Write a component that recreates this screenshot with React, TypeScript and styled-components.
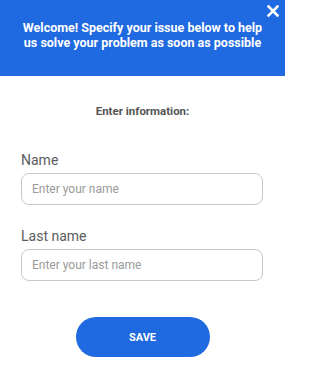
import React from 'react'
import styled, { createGlobalStyle } from 'styled-components'

const GlobalStyle = createGlobalStyle`
  * { box-sizing: border-box; }
  body {
    margin: 0;
    background: #fff;
    font-family: Roboto, "Liberation Sans", Arial, sans-serif;
  }
`

const Panel = styled.div`
  width: 285px;
  height: 376px;
  background: #fff;
  display: flex;
  flex-direction: column;
`

const Header = styled.header`
  position: relative;
  height: 76px;
  background: #1f69e1;
  color: #fff;
  padding: 20px 16px 0;
  text-align: center;
  font-size: 12.5px;
  font-weight: 700;
  line-height: 15px;
`

const CloseButton = styled.button`
  position: absolute;
  top: 4px;
  right: 5px;
  width: 14px;
  height: 14px;
  padding: 0;
  border: none;
  background: transparent;
  cursor: pointer;
  display: flex;
  align-items: center;
  justify-content: center;
`

const Form = styled.form`
  display: flex;
  flex-direction: column;
  padding: 28px 21px 0 21px;
`

const Title = styled.h2`
  margin: 0 0 34px;
  text-align: center;
  font-size: 11.5px;
  line-height: 14px;
  font-weight: 700;
  color: #555;
`

const Field = styled.label<{ $last?: boolean }>`
  display: flex;
  flex-direction: column;
  gap: 5px;
  margin-bottom: ${(p) => (p.$last ? '36px' : '23px')};
`

const Label = styled.span`
  font-size: 14px;
  line-height: 16px;
  color: #5c5c5c;
`

const Input = styled.input`
  width: 242px;
  height: 32px;
  border: 1px solid #c8c8c8;
  border-radius: 8px;
  padding: 0 10px;
  font-family: inherit;
  font-size: 12px;
  color: #333;
  outline: none;

  &::placeholder {
    color: #9a9a9a;
  }
`

const SaveButton = styled.button`
  align-self: center;
  width: 134px;
  height: 40px;
  border: none;
  border-radius: 20px;
  background: #1f69e1;
  color: #fff;
  font-family: inherit;
  font-size: 11px;
  font-weight: 700;
  cursor: pointer;
`

export default function App() {
  return (
    <>
      <GlobalStyle />
      <Panel>
        <Header>
          Welcome! Specify your issue below to help us solve your problem as soon as possible
          <CloseButton type="button" aria-label="Close">
            <svg width="12" height="12" viewBox="0 0 12 12">
              <path d="M1.5 1.5 L10.5 10.5 M10.5 1.5 L1.5 10.5" stroke="#fff" strokeWidth="2.6" strokeLinecap="square" />
            </svg>
          </CloseButton>
        </Header>
        <Form onSubmit={(e) => e.preventDefault()}>
          <Title>Enter information:</Title>
          <Field>
            <Label>Name</Label>
            <Input placeholder="Enter your name" />
          </Field>
          <Field $last>
            <Label>Last name</Label>
            <Input placeholder="Enter your last name" />
          </Field>
          <SaveButton type="submit">SAVE</SaveButton>
        </Form>
      </Panel>
    </>
  )
}
